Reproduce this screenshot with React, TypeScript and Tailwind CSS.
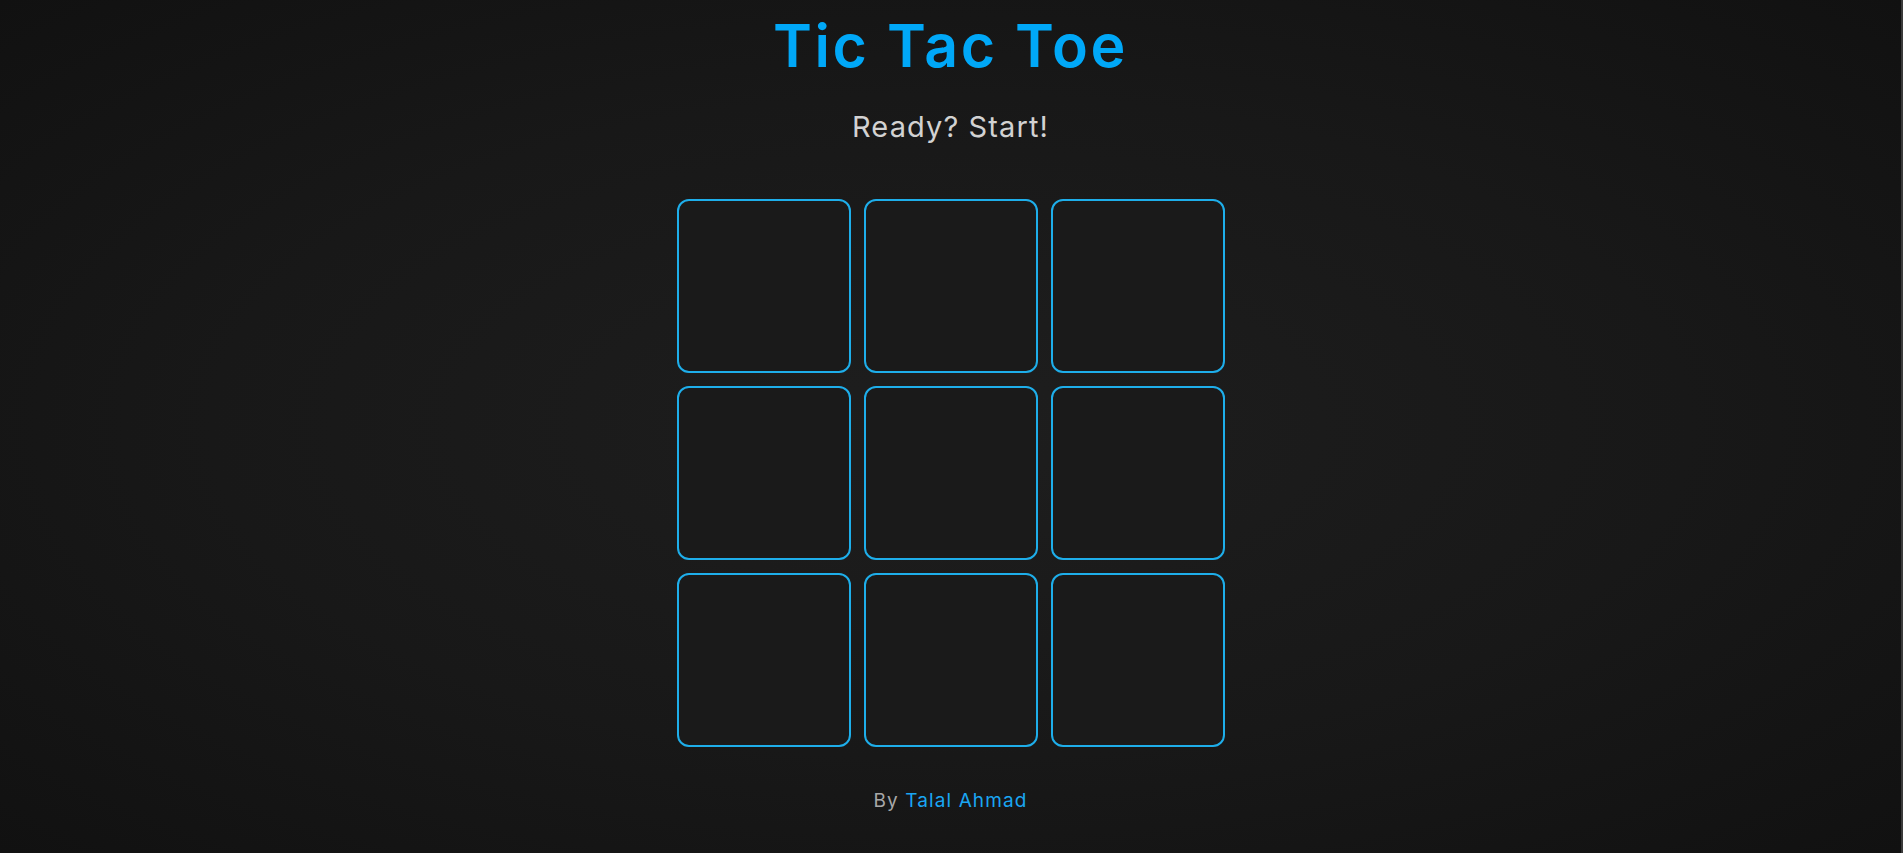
export default function App() {
  const cells = Array.from({ length: 9 });

  return (
    <div
      className="min-h-screen w-full flex flex-col items-center bg-[radial-gradient(ellipse_at_center,#1e1e1e_0%,#181818_55%,#111111_100%)] border-r-2 border-[#3a3a3a]"
      style={{ fontFamily: 'Inter, "Noto Sans", sans-serif' }}
    >
      <h1 className="mt-[16px] text-[59px] leading-none font-semibold text-[#00a8f8] tracking-[2.6px]">
        Tic Tac Toe
      </h1>
      <p className="mt-[37px] text-[29px] leading-none text-[#d2d2d2] tracking-[1.1px]">Ready? Start!</p>

      <div className="mt-[58px] grid grid-cols-3 gap-[13px]">
        {cells.map((_, i) => (
          <button
            key={i}
            className="w-[174px] h-[174px] rounded-[12px] border-2 border-[#1eaeea] bg-[#1a1a1a]"
          />
        ))}
      </div>

      <p className="mt-[44px] text-[19px] leading-none text-[#a8a8a8] tracking-[1.1px]">
        By <span className="text-[#1aa6f2]">Talal Ahmad</span>
      </p>
    </div>
  );
}
